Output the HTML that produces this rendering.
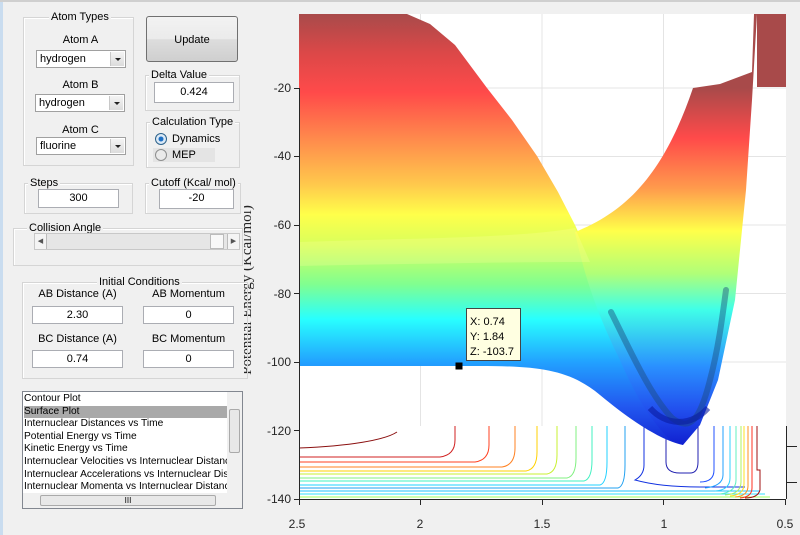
<!DOCTYPE html>
<html><head><meta charset="utf-8"><style>
*{box-sizing:border-box;margin:0;padding:0}
body{width:800px;height:535px;background:#f0f0f0;font-family:"Liberation Sans",sans-serif;font-size:11px;color:#000;position:relative;overflow:hidden}
.a{position:absolute}
.g{position:absolute;border:1px solid #d5d5d5;box-shadow:inset 1px 1px 0 #fff}
.gt{position:absolute;background:#f0f0f0;padding:0 2px;top:-7px;white-space:nowrap}
.lbl{position:absolute;text-align:center;white-space:nowrap}
.in{position:absolute;background:#fff;border:1px solid #abadb3;text-align:center;line-height:16px}
.sel{position:absolute;background:#fff;border:1px solid #a0a0a0;padding-left:3px;line-height:16px}
.sel i{position:absolute;right:1px;top:1px;width:14px;height:14px;background:linear-gradient(#f4f4f4,#dcdcdc);border-left:1px solid #c8c8c8}
.sel i:after{content:"";position:absolute;left:4px;top:6px;border:3px solid transparent;border-top:3px solid #222}
</style></head><body>
<div class="a" style="left:0;top:0;width:3px;height:535px;background:#c9dcef"></div>
<div class="a" style="left:0;top:0;width:800px;height:2px;background:#cfcfcf"></div>

<svg class="a" style="left:0;top:0" width="800" height="535">
<defs>
<linearGradient id="gl" gradientUnits="userSpaceOnUse" x1="0" y1="14" x2="0" y2="450">
<stop offset="0" stop-color="#a84a4a"/><stop offset="0.09" stop-color="#dc4848"/><stop offset="0.18" stop-color="#ff4a4a"/>
<stop offset="0.29" stop-color="#ff8c4c"/><stop offset="0.39" stop-color="#ffc84c"/><stop offset="0.46" stop-color="#ffff4a"/>
<stop offset="0.53" stop-color="#d8ff5c"/><stop offset="0.62" stop-color="#80ff90"/><stop offset="0.7" stop-color="#28ffff"/>
<stop offset="0.8" stop-color="#22a0ff"/><stop offset="0.9" stop-color="#2258f0"/><stop offset="1" stop-color="#1020d0"/>
</linearGradient>
<linearGradient id="gr" gradientUnits="userSpaceOnUse" x1="0" y1="88" x2="0" y2="445">
<stop offset="0" stop-color="#a84a4a"/><stop offset="0.14" stop-color="#ff4a4a"/><stop offset="0.28" stop-color="#ff9a4c"/>
<stop offset="0.4" stop-color="#ffff4a"/><stop offset="0.52" stop-color="#b0ff78"/><stop offset="0.62" stop-color="#40ffe8"/>
<stop offset="0.78" stop-color="#2a90ff"/><stop offset="0.9" stop-color="#2250ee"/><stop offset="1" stop-color="#1020d0"/>
</linearGradient>
</defs>
<rect x="299" y="14" width="487" height="485" fill="#fff"/>
<g stroke="#e4e4e4" stroke-width="1">
<line x1="420.5" y1="14" x2="420.5" y2="499"/><line x1="542" y1="14" x2="542" y2="499"/><line x1="663.5" y1="14" x2="663.5" y2="499"/>
<line x1="299" y1="88" x2="786" y2="88"/><line x1="299" y1="156.5" x2="786" y2="156.5"/><line x1="299" y1="225" x2="786" y2="225"/>
<line x1="299" y1="293.5" x2="786" y2="293.5"/><line x1="299" y1="362" x2="786" y2="362"/><line x1="299" y1="430.5" x2="786" y2="430.5"/>
</g>
<!-- contours -->
<rect x="299" y="426" width="487" height="73" fill="#fff"/>
<g fill="none" stroke-width="1">
<path d="M299 448 C350 446 385 440 397 432" stroke="#8b1010"/>
<path d="M299 457 H440 Q455 455 455 440 V426" stroke="#d02020"/>
<path d="M299 462 H475 Q489 460 489 445 V426" stroke="#ff4020"/>
<path d="M299 467 H502 Q515 465 515 448 V426" stroke="#ff8020"/>
<path d="M299 471 H526 Q537 469 537 452 V426" stroke="#ffd000"/>
<path d="M299 474 H547 Q557 472 557 455 V426" stroke="#c8f030"/>
<path d="M299 478 H567 Q576 476 576 458 V426" stroke="#80f080"/>
<path d="M299 481 H584 Q592 479 592 460 V426" stroke="#40f0c0"/>
<path d="M299 485 H600 Q607 483 607 462 V426" stroke="#20d0ff"/>
<path d="M299 488 H618 Q625 486 625 465 V426" stroke="#20a0f0"/>
<path d="M299 491 H760" stroke="#20c0ff"/>
<path d="M299 494 H765" stroke="#30e0ff"/>
<path d="M299 497 H770" stroke="#a0ff60"/>
<path d="M644 426 V465 Q644 475 635 480 Q660 487 700 487 H745" stroke="#1030e0"/>
<path d="M666 426 V462 Q666 473 680 473 H690 Q698 473 698 462 V426" stroke="#2020b0"/>
<path d="M714 426 V470 Q714 482 700 482" stroke="#2050ff"/>
<path d="M723 426 V475 Q723 486 705 488" stroke="#20a0ff"/>
<path d="M730 426 V478 Q730 490 715 491" stroke="#30d0ff"/>
<path d="M736 426 V480 Q736 492 720 494" stroke="#60f0c0"/>
<path d="M741 426 V482 Q741 494 725 495" stroke="#b0f060"/>
<path d="M744 426 V484 Q744 495 730 496" stroke="#ffe020"/>
<path d="M748 426 V486 Q748 496 735 497" stroke="#ff9020"/>
<path d="M752 426 V488 Q752 497 740 498" stroke="#ff3020"/>
<path d="M757 426 V470 H760 V490 Q758 498 745 498" stroke="#a01010"/>
</g>
<!-- left lobe -->
<path d="M299 14 H407 L430 24 L455 45 L487 88 L512 120 L537 156 L558 192 L575 225 L592 262 L608 298 L625 340 L645 385 L665 420 L683 445 C660 440 630 420 600 395 C570 370 540 366 480 366 L299 366 Z" fill="url(#gl)"/>
<!-- right lobe -->
<path d="M693 88 L720 84 L752 72 L754 14 L757 14 L752 100 L746 190 L735 300 L718 380 L700 425 L683 445 L670 440 C650 420 635 395 620 360 C600 320 585 280 575 232 C630 210 665 170 693 88 Z" fill="url(#gr)"/>
<path d="M299 242 C420 238 520 238 575 228 L590 262 C500 262 400 264 299 266 Z" fill="#ffffa0" opacity="0.25"/>
<rect x="757" y="14" width="29" height="73" fill="#a84a4a"/>
<!-- trajectory -->
<path d="M611 312 C630 350 650 395 672 418 C690 432 700 420 710 380 C718 350 722 320 726 290" fill="none" stroke="#1a4a7a" stroke-width="6" stroke-linecap="round" opacity="0.45"/>
<path d="M650 408 C665 425 690 428 708 408" fill="none" stroke="#0a1aa0" stroke-width="6" opacity="0.6"/>
<!-- axes -->
<g stroke="#262626" stroke-width="1" fill="none">
<path d="M299.5 88 V499.5 H786"/>
<path d="M786.5 426 V499"/>
<path d="M786 446.5 H797 M786 482.5 H797"/>
<path d="M294 88.5 H299 M294 156.5 H299 M294 225.5 H299 M294 293.5 H299 M294 362.5 H299 M294 430.5 H299 M294 499.5 H299"/>
<path d="M299.5 499 V505 M420.5 499 V505 M542.5 499 V505 M663.5 499 V505 M785.5 499 V505"/>
</g>
<g font-family="Liberation Sans,sans-serif" font-size="12" fill="#262626">
<text x="291" y="92" text-anchor="end">-20</text><text x="291" y="160" text-anchor="end">-40</text>
<text x="291" y="229" text-anchor="end">-60</text><text x="291" y="298" text-anchor="end">-80</text>
<text x="291" y="366" text-anchor="end">-100</text><text x="291" y="435" text-anchor="end">-120</text>
<text x="291" y="503" text-anchor="end">-140</text>
<text x="297" y="528" text-anchor="middle">2.5</text><text x="420" y="528" text-anchor="middle">2</text>
<text x="542" y="528" text-anchor="middle">1.5</text><text x="664" y="528" text-anchor="middle">1</text>
<text x="785" y="528" text-anchor="middle">0.5</text>
</g>
<text transform="translate(251,290) rotate(-90)" text-anchor="middle" font-family="Liberation Serif,serif" font-size="15" fill="#262626">Potential Energy (Kcal/mol)</text>
<!-- datatip -->
<rect x="455.5" y="362.5" width="7" height="7" fill="#000"/>
<rect x="466.5" y="308.5" width="54" height="52" fill="#ffffe1" stroke="#444"/>
<g font-family="Liberation Sans,sans-serif" font-size="11" fill="#000">
<text x="470" y="325">X: 0.74</text><text x="470" y="340">Y: 1.84</text><text x="470" y="355">Z: -103.7</text>
</g>
</svg>

<!-- left panel -->
<div class="a" style="left:4px;top:2px;width:240px;height:533px;background:#f0f0f0"></div>
<div class="g" style="left:23px;top:17px;width:111px;height:149px"><span class="gt" style="left:25px">Atom Types</span></div>
<div class="lbl" style="left:36px;top:34px;width:89px">Atom A</div>
<div class="sel" style="left:36px;top:50px;width:90px;height:18px">hydrogen<i></i></div>
<div class="lbl" style="left:36px;top:79px;width:89px">Atom B</div>
<div class="sel" style="left:35px;top:94px;width:90px;height:18px">hydrogen<i></i></div>
<div class="lbl" style="left:36px;top:124px;width:89px">Atom C</div>
<div class="sel" style="left:36px;top:137px;width:90px;height:18px">fluorine<i></i></div>

<div class="a" style="left:146px;top:16px;width:92px;height:46px;border:1px solid #707070;border-radius:3px;background:linear-gradient(#f2f2f2 0%,#ebebeb 50%,#dddddd 51%,#cfcfcf 100%);text-align:center;line-height:46px">Update</div>

<div class="g" style="left:145px;top:75px;width:95px;height:36px"><span class="gt" style="left:3px">Delta Value</span></div>
<div class="in" style="left:154px;top:82px;width:80px;height:21px;line-height:19px">0.424</div>

<div class="g" style="left:146px;top:122px;width:94px;height:46px"><span class="gt" style="left:3px">Calculation Type</span></div>
<div class="a" style="left:155px;top:133px;width:12px;height:12px;border-radius:50%;border:1px solid #2c628b;background:radial-gradient(#1d6fc4 30%,#dbe9f6 40%)"></div>
<div class="a" style="left:172px;top:133px">Dynamics</div>
<div class="a" style="left:153px;top:148px;width:62px;height:14px;background:#e4e4e4"></div>
<div class="a" style="left:155px;top:149px;width:12px;height:12px;border-radius:50%;border:1px solid #8e8f8f;background:#eaeaea"></div>
<div class="a" style="left:172px;top:149px">MEP</div>

<div class="g" style="left:24px;top:183px;width:109px;height:31px"><span class="gt" style="left:3px">Steps</span></div>
<div class="in" style="left:38px;top:189px;width:81px;height:19px">300</div>
<div class="g" style="left:145px;top:183px;width:96px;height:31px"><span class="gt" style="left:3px">Cutoff (Kcal/ mol)</span></div>
<div class="in" style="left:159px;top:189px;width:75px;height:20px">-20</div>

<div class="g" style="left:13px;top:228px;width:230px;height:38px"><span class="gt" style="left:13px">Collision Angle</span></div>
<div class="a" style="left:34px;top:233px;width:206px;height:17px;background:#e6e6e6;border:1px solid #c8c8c8"></div>
<div class="a" style="left:35px;top:234px;width:12px;height:15px;background:#f4f4f4;border-right:1px solid #bbb;font-size:7px;line-height:15px;text-align:center;color:#555">◀</div>
<div class="a" style="left:210px;top:234px;width:14px;height:15px;background:#f8f8f8;border:1px solid #bbb"></div>
<div class="a" style="left:227px;top:234px;width:12px;height:15px;background:#f4f4f4;border-left:1px solid #bbb;font-size:7px;line-height:15px;text-align:center;color:#555">▶</div>

<div class="g" style="left:22px;top:282px;width:226px;height:97px"><span class="gt" style="left:74px">Initial Conditions</span></div>
<div class="lbl" style="left:32px;top:288px;width:91px">AB Distance (A)</div>
<div class="lbl" style="left:143px;top:288px;width:91px">AB Momentum</div>
<div class="in" style="left:32px;top:306px;width:91px;height:18px">2.30</div>
<div class="in" style="left:143px;top:306px;width:91px;height:18px">0</div>
<div class="lbl" style="left:32px;top:333px;width:91px">BC Distance (A)</div>
<div class="lbl" style="left:143px;top:333px;width:91px">BC Momentum</div>
<div class="in" style="left:32px;top:350px;width:91px;height:18px">0.74</div>
<div class="in" style="left:143px;top:350px;width:91px;height:18px">0</div>

<div class="a" style="left:22px;top:391px;width:221px;height:118px;background:#fff;border:1px solid #828790;overflow:hidden;line-height:12.6px;font-size:10.2px">
<div style="position:absolute;left:1px;top:1px;width:203px;white-space:nowrap;overflow:hidden">
<div>Contour Plot</div><div style="background:#a9a9a9">Surface Plot</div><div>Internuclear Distances vs Time</div><div>Potential Energy vs Time</div><div>Kinetic Energy vs Time</div><div>Internuclear Velocities vs Internuclear Distance</div><div>Internuclear Accelerations vs Internuclear Distance</div><div>Internuclear Momenta vs Internuclear Distance</div></div>
<div style="position:absolute;left:204px;top:0;width:15px;height:101px;background:#f0f0f0"></div>
<div style="position:absolute;left:206px;top:17px;width:11px;height:44px;background:#e8e8e8;border:1px solid #aaa;border-radius:2px"></div>
<div style="position:absolute;left:0;top:101px;width:219px;height:15px;background:#f0f0f0"></div>
<div style="position:absolute;left:17px;top:103px;width:176px;height:11px;background:#e8e8e8;border:1px solid #aaa;border-radius:2px;text-align:center;font-size:8px;line-height:9px">III</div>
</div>
</body></html>
